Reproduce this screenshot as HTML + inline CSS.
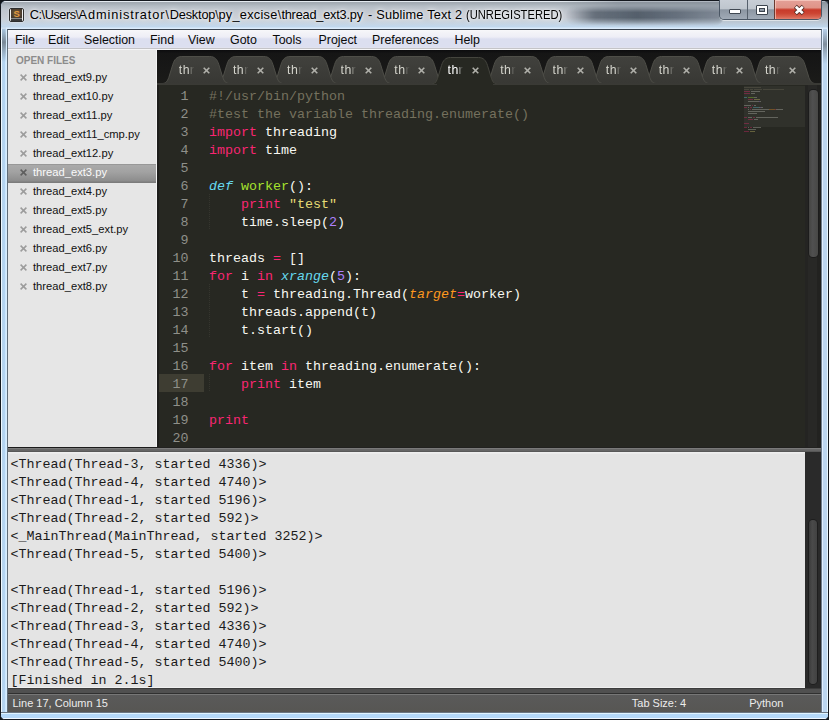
<!DOCTYPE html><html><head><meta charset="utf-8"><style>*{margin:0;padding:0;box-sizing:border-box}
html,body{width:829px;height:720px;overflow:hidden;background:#101418}
body{position:relative;font-family:"Liberation Sans",sans-serif}
body>div{position:absolute}
#frame{left:0;top:0;width:829px;height:720px;background:#b8d6f4;border:1px solid #14181e;border-radius:6px 6px 5px 5px}
#tglass{left:1px;top:1px;width:827px;height:28px;border-radius:5px 5px 0 0;background:linear-gradient(180deg,#e4eaf0 0,#e4eaf0 1px,#a0a8b0 1px,#a8b0b8 3px,#b4bcc4 5px,#c0c6ce 9px,#c8ccd4 16px,#c8d2dc 20px,#c4d6e8 24px,#c0d8ee 26px,#dcecfc 27px,#dcecfc 28px)}
#blob{left:566px;top:5px;width:158px;height:21px;border-radius:10px;background:linear-gradient(90deg,rgba(70,80,92,0) 0%,rgba(66,76,88,.75) 18%,rgba(58,68,80,.9) 45%,rgba(70,80,94,.8) 70%,rgba(95,106,120,.6) 100%);-webkit-mask-image:linear-gradient(180deg,transparent 0%,#000 35%,#000 60%,transparent 100%);filter:blur(2px)}
#blob2{left:560px;top:1px;width:268px;height:27px;background:linear-gradient(180deg,rgba(110,120,130,.45),rgba(120,135,150,.25) 60%,rgba(150,170,190,0));-webkit-mask-image:linear-gradient(90deg,transparent 0,#000 60px)}
#lglass{left:1px;top:29px;width:7px;height:683px;background:linear-gradient(90deg,#eef8ff 0,#eef8ff 1px,#b8d4ec 1px,#b2d4f4 4px,#c8e4fc 4px,#dcf0ff 6px,#606c78 6px,#606c78 7px)}
#rglass{left:821px;top:29px;width:7px;height:683px;background:linear-gradient(90deg,#6c7c8c 0,#6c7c8c 1px,#e0eeff 1px,#e0eeff 2px,#bcd6f0 2px,#bcd6f0 6px,#e8f8ff 6px,#e8f8ff 7px)}
#bglass{left:1px;top:712px;width:827px;height:7px;border-radius:0 0 4px 4px;background:linear-gradient(180deg,#6a7682 0,#6a7682 1px,#e0f4ff 1px,#e0f4ff 2px,#b4d8f8 2px,#b4d8f8 6px,#f0f8ff 6px,#f0f8ff 7px)}
#icon{left:9px;top:8px;width:15px;height:14px;background:#f2f2f2;border:1px solid #2e2e2e;border-radius:2px;box-shadow:0 0 2px rgba(255,255,255,.8)}
#iconin{position:absolute;left:1px;top:0px;width:11px;height:9px;background:radial-gradient(ellipse at 50% 45%,#7a5a36,#4a3c2e 70%,#3a342c);overflow:hidden}
#iconin b{position:absolute;left:2.5px;top:-1px;font:bold 9.5px "Liberation Sans",sans-serif;color:#e09a40}
#iconbar{position:absolute;left:1px;top:9px;width:11px;height:3px;background:linear-gradient(180deg,#8a8a8a 0,#8a8a8a 1px,#3a3a3a 1px)}
.title{left:29px;top:6.5px;font-size:12.75px;color:#000;white-space:nowrap;text-shadow:0 0 7px rgba(255,255,255,.95),0 0 3px rgba(255,255,255,.9)}
#wbtns{left:719px;top:0;width:103px;height:20px;border:1px solid #4a5664;border-top:none;border-radius:0 0 5px 5px;overflow:hidden;box-shadow:0 1px 0 rgba(255,255,255,.5)}
#bmin{position:absolute;left:0;top:0;width:28px;height:19px;background:linear-gradient(180deg,#c8ced6 0%,#bfc6ce 45%,#8c96a2 52%,#a0aab6 100%);border-right:1px solid #56606c}
#bmax{position:absolute;left:28px;top:0;width:27px;height:19px;background:linear-gradient(180deg,#c8ced6 0%,#bfc6ce 45%,#8c96a2 52%,#a0aab6 100%);border-right:1px solid #6a3a30}
#bclose{position:absolute;left:55px;top:0;width:48px;height:19px;background:linear-gradient(180deg,#e4a098 0%,#e09488 40%,#c83a2a 52%,#cc4432 70%,#d86450 90%,#e08070 100%);box-shadow:inset 1px 1px 0 rgba(255,220,210,.6),inset -1px 0 0 rgba(255,220,210,.4)}
#gmin{position:absolute;left:9px;top:9px;width:12px;height:5px;background:#fff;border:1px solid #404852;border-radius:1px}
#gmax{position:absolute;left:8px;top:5px;width:12px;height:10px;border:1px solid #3c444e;border-radius:1px;box-shadow:inset 0 0 0 2px #fff,inset 0 0 0 3px #3c444e}

#menubar{left:7px;top:29px;width:815px;height:19px;background:linear-gradient(180deg,#f8f8fa 0px,#f4f4f8 2px,#eeeef6 7px,#dcdff0 9px,#dcdff0 17px,#e4e4ee 18px);border-top:1px solid #3a4450;border-left:1px solid #606c78;border-right:1px solid #6c7c8c}
#mbline1{left:8px;top:48px;width:813px;height:1px;background:#c4c4c8}
#mbline2{left:8px;top:49px;width:813px;height:1px;background:#f6f6f8}
.mi{position:absolute;top:2.5px;font-size:12.4px;color:#0a0a0a;white-space:nowrap}
#sidebar{left:8px;top:50px;width:149px;height:398px;background:#e6e6e6;overflow:hidden}
#sbhl{position:absolute;left:148px;top:0;width:1px;height:397px;background:#f4f4f4}
#sidebar:after{content:"";position:absolute;left:0;top:397px;width:149px;height:1px;background:#1c1c1c}
#ofh{position:absolute;left:8px;top:4.8px;font:bold 10px "Liberation Sans",sans-serif;color:#8c8c8c}
.row{position:absolute;left:0;width:149px;height:19px}
.row.sel{background:linear-gradient(180deg,#989898 0,#989898 1px,#aaaaaa 1px,#a2a2a2 8px,#8c8c8c 17px,#7c7c7c 18px);}
.fx{position:absolute;left:12px;top:5px;width:7px;height:7px;line-height:0}
.fn{position:absolute;left:25px;top:2px;font-size:11.2px;color:#111;white-space:nowrap}
.sel .fn{color:#fafafa}
#tabbar{left:157px;top:50px;width:664px;height:34px;overflow:hidden}
.tabt{position:absolute;top:13px;font-size:12.3px;letter-spacing:0.5px;color:#d4d4cc;white-space:nowrap;width:22px;overflow:hidden;-webkit-mask-image:linear-gradient(90deg,#000 0,#000 11px,rgba(0,0,0,.3) 12.5px,rgba(0,0,0,.08) 15px,transparent 18px)}
.tabt.act{color:#ffffff}
.tabx{position:absolute;top:17px;width:7px;height:7px;line-height:0}
#editor{left:157px;top:84px;width:664px;height:364px;background:#272822;overflow:hidden}
#edl1{left:157px;top:84px;width:2px;height:364px;background:#1e1e1c}
#edl2{left:157px;top:447px;width:664px;height:1px;background:#222220}
.code{position:absolute;font-family:"Liberation Mono",monospace;font-size:13.33px;line-height:18px;white-space:pre}
#gutter{left:0;top:4px;width:31.5px;text-align:right;color:#8f908a}
#gl{position:absolute;left:1px;top:290px;width:46px;height:18px;background:#3e3d32}
#src{left:52px;top:4px;color:#f8f8f2}
.guide{position:absolute;left:52px;width:1px;height:18px;background:repeating-linear-gradient(180deg,#35352e 0 1px,transparent 1px 2px)}
.c{color:#75715e}.k{color:#f92672}.s{color:#66d9ef;font-style:italic}.f{color:#a6e22e}.y{color:#e6db74}.n{color:#ae81ff}.p{color:#fd971f;font-style:italic}
#mmbox{position:absolute;left:587px;top:2px;width:61px;height:41px;background:rgba(255,255,255,.045)}
#mm{position:absolute;left:587px;top:3px;width:61px;height:50px}
#mm i{position:absolute;height:1.2px;opacity:.32}
#vtrack{position:absolute;left:648px;top:0;width:16px;height:364px;background:linear-gradient(90deg,#242422 0,#242422 3px,#282826 3px,#282826 12px,#222220 12px)}
#vthumb{position:absolute;left:652px;top:6px;width:8.5px;height:167px;background:linear-gradient(90deg,#444442,#505050 40%,#484846);border-radius:4px;box-shadow:0 0 0 1px #1c1c1c}
#sep{left:8px;top:448px;width:813px;height:4px;background:linear-gradient(180deg,#7a7a7a 0,#7a7a7a 1px,#686868 1px,#646464 3px,#585858 3px)}
#output{left:8px;top:452px;width:797px;height:236px;background:#e4e4e4;overflow:hidden}
#ohl1{position:absolute;left:0;top:0;width:797px;height:2px;background:linear-gradient(180deg,#f0f0f0,#e8e8e8)}
#ohl2{position:absolute;left:0;top:235px;width:797px;height:1px;background:#f0f0f0}
#out{left:2.5px;top:3.5px;color:#1a1a1a}
#otrack{left:805px;top:452px;width:16px;height:236px;background:#2a2a2a}
#othumb{left:809px;top:520px;width:8px;height:164px;box-shadow:0 0 0 1px #1e1e1e;background:linear-gradient(90deg,#3a3a3a,#4a4a4a 40%,#424242);border-radius:4px}
#status{left:8px;top:688px;width:813px;height:24px;background:linear-gradient(180deg,#5a5a5a 7px,#575653 24px)}
#stband{position:absolute;left:0;top:0;width:813px;height:5px;background:#505050;border-top:1px solid #3c3c3c}
#stl1{position:absolute;left:0;top:5px;width:813px;height:1px;background:#303030}
#stl2{position:absolute;left:0;top:6px;width:813px;height:1px;background:#777777}
.st{position:absolute;top:9px;font-size:11px;color:#ececec;white-space:nowrap}

#tabline{left:157px;top:84px;width:664px;height:1px;background:#3a3a35}
#tabline2{top:84px;height:1px;background:#272822}
#lrefl{left:2px;top:26px;width:4px;height:36px;background:linear-gradient(180deg,rgba(110,120,130,0),rgba(100,110,120,.75) 45%,rgba(110,120,130,.5) 65%,rgba(120,130,140,0))}
#rrefl{left:823px;top:28px;width:4px;height:36px;background:linear-gradient(180deg,rgba(110,120,130,0),rgba(100,110,120,.7) 45%,rgba(110,120,130,.45) 65%,rgba(120,130,140,0))}
</style></head><body>
<div id="frame"></div>
<div id="tglass"></div><div id="blob"></div><div id="blob2"></div>
<div id="lglass"></div><div id="rglass"></div><div id="bglass"></div><div id="lrefl"></div><div id="rrefl"></div>
<div id="icon"><div id="iconin"><b>S</b></div><div id="iconbar"></div></div>
<div class="title" style="left:29.8px;letter-spacing:-0.47px">C:\Users\</div>
<div class="title" style="left:78.6px;letter-spacing:0.9px">Administrator\</div>
<div class="title" style="left:169.8px;letter-spacing:-0.2px">Desktop\</div>
<div class="title" style="left:218.5px;letter-spacing:0.27px">py_excise\</div>
<div class="title" style="left:281.4px;letter-spacing:-0.21px">thread_ext3.py</div>
<div class="title" style="left:368px;letter-spacing:0.2px">- Sublime Text 2</div>
<div class="title" style="left:466px;transform:scaleX(0.876);transform-origin:0 0">(UNREGISTERED)</div>
<div id="wbtns"><div id="bmin"><div id="gmin"></div></div><div id="bmax"><div id="gmax"></div></div><div id="bclose"><svg width="14" height="12" viewBox="0 0 14 12" style="position:absolute;left:18px;top:4px"><path d="M2.4,2.4 L10.2,9.6 M10.2,2.4 L2.4,9.6" stroke="#4a2620" stroke-width="4.2"/><path d="M2.8,2.8 L9.8,9.2 M9.8,2.8 L2.8,9.2" stroke="#fff" stroke-width="2.8"/></svg></div></div>
<div id="menubar">
<span class="mi" style="left:7.0px">File</span>
<span class="mi" style="left:40.0px">Edit</span>
<span class="mi" style="left:76.0px">Selection</span>
<span class="mi" style="left:142.0px">Find</span>
<span class="mi" style="left:180.0px">View</span>
<span class="mi" style="left:222.0px">Goto</span>
<span class="mi" style="left:264.5px">Tools</span>
<span class="mi" style="left:310.5px">Project</span>
<span class="mi" style="left:364.0px">Preferences</span>
<span class="mi" style="left:446.5px">Help</span>
</div><div id="mbline1"></div><div id="mbline2"></div>
<div id="sidebar"><div id="ofh">OPEN FILES</div>
<div class="row" style="top:19px"><span class="fx"><svg width="7" height="7" viewBox="0 0 7 7"><path d="M0.6,0.6 L6.4,6.4 M6.4,0.6 L0.6,6.4" stroke="#9c9c9c" stroke-width="1.5"/></svg></span><span class="fn">thread_ext9.py</span></div>
<div class="row" style="top:38px"><span class="fx"><svg width="7" height="7" viewBox="0 0 7 7"><path d="M0.6,0.6 L6.4,6.4 M6.4,0.6 L0.6,6.4" stroke="#9c9c9c" stroke-width="1.5"/></svg></span><span class="fn">thread_ext10.py</span></div>
<div class="row" style="top:57px"><span class="fx"><svg width="7" height="7" viewBox="0 0 7 7"><path d="M0.6,0.6 L6.4,6.4 M6.4,0.6 L0.6,6.4" stroke="#9c9c9c" stroke-width="1.5"/></svg></span><span class="fn">thread_ext11.py</span></div>
<div class="row" style="top:76px"><span class="fx"><svg width="7" height="7" viewBox="0 0 7 7"><path d="M0.6,0.6 L6.4,6.4 M6.4,0.6 L0.6,6.4" stroke="#9c9c9c" stroke-width="1.5"/></svg></span><span class="fn">thread_ext11_cmp.py</span></div>
<div class="row" style="top:95px"><span class="fx"><svg width="7" height="7" viewBox="0 0 7 7"><path d="M0.6,0.6 L6.4,6.4 M6.4,0.6 L0.6,6.4" stroke="#9c9c9c" stroke-width="1.5"/></svg></span><span class="fn">thread_ext12.py</span></div>
<div class="row sel" style="top:114px"><span class="fx"><svg width="7" height="7" viewBox="0 0 7 7"><path d="M0.6,0.6 L6.4,6.4 M6.4,0.6 L0.6,6.4" stroke="#5e5e5e" stroke-width="1.5"/></svg></span><span class="fn">thread_ext3.py</span></div>
<div class="row" style="top:133px"><span class="fx"><svg width="7" height="7" viewBox="0 0 7 7"><path d="M0.6,0.6 L6.4,6.4 M6.4,0.6 L0.6,6.4" stroke="#9c9c9c" stroke-width="1.5"/></svg></span><span class="fn">thread_ext4.py</span></div>
<div class="row" style="top:152px"><span class="fx"><svg width="7" height="7" viewBox="0 0 7 7"><path d="M0.6,0.6 L6.4,6.4 M6.4,0.6 L0.6,6.4" stroke="#9c9c9c" stroke-width="1.5"/></svg></span><span class="fn">thread_ext5.py</span></div>
<div class="row" style="top:171px"><span class="fx"><svg width="7" height="7" viewBox="0 0 7 7"><path d="M0.6,0.6 L6.4,6.4 M6.4,0.6 L0.6,6.4" stroke="#9c9c9c" stroke-width="1.5"/></svg></span><span class="fn">thread_ext5_ext.py</span></div>
<div class="row" style="top:190px"><span class="fx"><svg width="7" height="7" viewBox="0 0 7 7"><path d="M0.6,0.6 L6.4,6.4 M6.4,0.6 L0.6,6.4" stroke="#9c9c9c" stroke-width="1.5"/></svg></span><span class="fn">thread_ext6.py</span></div>
<div class="row" style="top:209px"><span class="fx"><svg width="7" height="7" viewBox="0 0 7 7"><path d="M0.6,0.6 L6.4,6.4 M6.4,0.6 L0.6,6.4" stroke="#9c9c9c" stroke-width="1.5"/></svg></span><span class="fn">thread_ext7.py</span></div>
<div class="row" style="top:228px"><span class="fx"><svg width="7" height="7" viewBox="0 0 7 7"><path d="M0.6,0.6 L6.4,6.4 M6.4,0.6 L0.6,6.4" stroke="#9c9c9c" stroke-width="1.5"/></svg></span><span class="fn">thread_ext8.py</span></div>
<div id="sbhl"></div></div>
<div id="tabbar">
<svg width="664" height="34" viewBox="0 0 664 34" style="position:absolute;left:0;top:0"><defs><linearGradient id="tg" x1="0" y1="0" x2="0" y2="1"><stop offset="0" stop-color="#41413d"/><stop offset="1" stop-color="#383834"/></linearGradient><linearGradient id="bgg" x1="0" y1="0" x2="0" y2="1"><stop offset="0" stop-color="#0c0c0e"/><stop offset="0.1" stop-color="#151515"/><stop offset="1" stop-color="#1b1b19"/></linearGradient></defs><rect x="0" y="0" width="664" height="34" fill="url(#bgg)"/><path d="M 590.90,33.50 C 594.90,33.50 596.40,31.50 597.90,27.50 L 601.90,14.50 C 603.40,9.50 605.90,6.50 610.90,6.50 L 638.90,6.50 C 643.90,6.50 646.40,9.50 647.90,14.50 L 651.90,27.50 C 653.40,31.50 654.90,33.50 658.90,33.50 Z" fill="url(#tg)" stroke="#4e4e48" stroke-width="1"/><path d="M 537.80,33.50 C 541.80,33.50 543.30,31.50 544.80,27.50 L 548.80,14.50 C 550.30,9.50 552.80,6.50 557.80,6.50 L 585.80,6.50 C 590.80,6.50 593.30,9.50 594.80,14.50 L 598.80,27.50 C 600.30,31.50 601.80,33.50 605.80,33.50 Z" fill="url(#tg)" stroke="#4e4e48" stroke-width="1"/><path d="M 484.70,33.50 C 488.70,33.50 490.20,31.50 491.70,27.50 L 495.70,14.50 C 497.20,9.50 499.70,6.50 504.70,6.50 L 532.70,6.50 C 537.70,6.50 540.20,9.50 541.70,14.50 L 545.70,27.50 C 547.20,31.50 548.70,33.50 552.70,33.50 Z" fill="url(#tg)" stroke="#4e4e48" stroke-width="1"/><path d="M 431.80,33.50 C 435.80,33.50 437.30,31.50 438.80,27.50 L 442.80,14.50 C 444.30,9.50 446.80,6.50 451.80,6.50 L 479.80,6.50 C 484.80,6.50 487.30,9.50 488.80,14.50 L 492.80,27.50 C 494.30,31.50 495.80,33.50 499.80,33.50 Z" fill="url(#tg)" stroke="#4e4e48" stroke-width="1"/><path d="M 378.60,33.50 C 382.60,33.50 384.10,31.50 385.60,27.50 L 389.60,14.50 C 391.10,9.50 393.60,6.50 398.60,6.50 L 426.60,6.50 C 431.60,6.50 434.10,9.50 435.60,14.50 L 439.60,27.50 C 441.10,31.50 442.60,33.50 446.60,33.50 Z" fill="url(#tg)" stroke="#4e4e48" stroke-width="1"/><path d="M 326.20,33.50 C 330.20,33.50 331.70,31.50 333.20,27.50 L 337.20,14.50 C 338.70,9.50 341.20,6.50 346.20,6.50 L 374.20,6.50 C 379.20,6.50 381.70,9.50 383.20,14.50 L 387.20,27.50 C 388.70,31.50 390.20,33.50 394.20,33.50 Z" fill="url(#tg)" stroke="#4e4e48" stroke-width="1"/><path d="M 220.30,33.50 C 224.30,33.50 225.80,31.50 227.30,27.50 L 231.30,14.50 C 232.80,9.50 235.30,6.50 240.30,6.50 L 268.30,6.50 C 273.30,6.50 275.80,9.50 277.30,14.50 L 281.30,27.50 C 282.80,31.50 284.30,33.50 288.30,33.50 Z" fill="url(#tg)" stroke="#4e4e48" stroke-width="1"/><path d="M 166.60,33.50 C 170.60,33.50 172.10,31.50 173.60,27.50 L 177.60,14.50 C 179.10,9.50 181.60,6.50 186.60,6.50 L 214.60,6.50 C 219.60,6.50 222.10,9.50 223.60,14.50 L 227.60,27.50 C 229.10,31.50 230.60,33.50 234.60,33.50 Z" fill="url(#tg)" stroke="#4e4e48" stroke-width="1"/><path d="M 113.00,33.50 C 117.00,33.50 118.50,31.50 120.00,27.50 L 124.00,14.50 C 125.50,9.50 128.00,6.50 133.00,6.50 L 161.00,6.50 C 166.00,6.50 168.50,9.50 170.00,14.50 L 174.00,27.50 C 175.50,31.50 177.00,33.50 181.00,33.50 Z" fill="url(#tg)" stroke="#4e4e48" stroke-width="1"/><path d="M 58.90,33.50 C 62.90,33.50 64.40,31.50 65.90,27.50 L 69.90,14.50 C 71.40,9.50 73.90,6.50 78.90,6.50 L 106.90,6.50 C 111.90,6.50 114.40,9.50 115.90,14.50 L 119.90,27.50 C 121.40,31.50 122.90,33.50 126.90,33.50 Z" fill="url(#tg)" stroke="#4e4e48" stroke-width="1"/><path d="M 4.80,33.50 C 8.80,33.50 10.30,31.50 11.80,27.50 L 15.80,14.50 C 17.30,9.50 19.80,6.50 24.80,6.50 L 52.80,6.50 C 57.80,6.50 60.30,9.50 61.80,14.50 L 65.80,27.50 C 67.30,31.50 68.80,33.50 72.80,33.50 Z" fill="url(#tg)" stroke="#4e4e48" stroke-width="1"/><rect x="0" y="33" width="664" height="1" fill="#393935"/><path d="M 273.50,34.50 C 277.50,34.50 279.00,32.50 280.50,28.50 L 284.50,15.50 C 286.00,10.50 288.50,7.50 293.50,7.50 L 321.50,7.50 C 326.50,7.50 329.00,10.50 330.50,15.50 L 334.50,28.50 C 336.00,32.50 337.50,34.50 341.50,34.50 Z" fill="#272822" stroke="#45453e" stroke-width="1"/><rect x="277.5" y="33" width="60" height="1" fill="#272822"/></svg>
<div class="tabt" style="left:21.8px">thr</div><div class="tabx" style="left:45.8px"><svg width="7" height="7" viewBox="0 0 7 7"><path d="M0.7,0.7 L6.3,6.3 M6.3,0.7 L0.7,6.3" stroke="#b0b0aa" stroke-width="1.6"/></svg></div>
<div class="tabt" style="left:75.9px">thr</div><div class="tabx" style="left:99.9px"><svg width="7" height="7" viewBox="0 0 7 7"><path d="M0.7,0.7 L6.3,6.3 M6.3,0.7 L0.7,6.3" stroke="#b0b0aa" stroke-width="1.6"/></svg></div>
<div class="tabt" style="left:130.0px">thr</div><div class="tabx" style="left:154.0px"><svg width="7" height="7" viewBox="0 0 7 7"><path d="M0.7,0.7 L6.3,6.3 M6.3,0.7 L0.7,6.3" stroke="#b0b0aa" stroke-width="1.6"/></svg></div>
<div class="tabt" style="left:183.6px">thr</div><div class="tabx" style="left:207.6px"><svg width="7" height="7" viewBox="0 0 7 7"><path d="M0.7,0.7 L6.3,6.3 M6.3,0.7 L0.7,6.3" stroke="#b0b0aa" stroke-width="1.6"/></svg></div>
<div class="tabt" style="left:237.3px">thr</div><div class="tabx" style="left:261.3px"><svg width="7" height="7" viewBox="0 0 7 7"><path d="M0.7,0.7 L6.3,6.3 M6.3,0.7 L0.7,6.3" stroke="#b0b0aa" stroke-width="1.6"/></svg></div>
<div class="tabt act" style="left:290.5px">thr</div><div class="tabx" style="left:314.5px"><svg width="7" height="7" viewBox="0 0 7 7"><path d="M0.7,0.7 L6.3,6.3 M6.3,0.7 L0.7,6.3" stroke="#b0b0aa" stroke-width="1.6"/></svg></div>
<div class="tabt" style="left:343.2px">thr</div><div class="tabx" style="left:367.2px"><svg width="7" height="7" viewBox="0 0 7 7"><path d="M0.7,0.7 L6.3,6.3 M6.3,0.7 L0.7,6.3" stroke="#b0b0aa" stroke-width="1.6"/></svg></div>
<div class="tabt" style="left:395.6px">thr</div><div class="tabx" style="left:419.6px"><svg width="7" height="7" viewBox="0 0 7 7"><path d="M0.7,0.7 L6.3,6.3 M6.3,0.7 L0.7,6.3" stroke="#b0b0aa" stroke-width="1.6"/></svg></div>
<div class="tabt" style="left:448.8px">thr</div><div class="tabx" style="left:472.8px"><svg width="7" height="7" viewBox="0 0 7 7"><path d="M0.7,0.7 L6.3,6.3 M6.3,0.7 L0.7,6.3" stroke="#b0b0aa" stroke-width="1.6"/></svg></div>
<div class="tabt" style="left:501.7px">thr</div><div class="tabx" style="left:525.7px"><svg width="7" height="7" viewBox="0 0 7 7"><path d="M0.7,0.7 L6.3,6.3 M6.3,0.7 L0.7,6.3" stroke="#b0b0aa" stroke-width="1.6"/></svg></div>
<div class="tabt" style="left:554.8px">thr</div><div class="tabx" style="left:578.8px"><svg width="7" height="7" viewBox="0 0 7 7"><path d="M0.7,0.7 L6.3,6.3 M6.3,0.7 L0.7,6.3" stroke="#b0b0aa" stroke-width="1.6"/></svg></div>
<div class="tabt" style="left:607.9px">thr</div><div class="tabx" style="left:631.9px"><svg width="7" height="7" viewBox="0 0 7 7"><path d="M0.7,0.7 L6.3,6.3 M6.3,0.7 L0.7,6.3" stroke="#b0b0aa" stroke-width="1.6"/></svg></div>
</div>
<div id="editor">
<div id="gl"></div>
<div id="gutter" class="code">1
2
3
4
5
6
7
8
9
10
11
12
13
14
15
16
17
18
19
20</div>
<div class="guide" style="top:110px"></div>
<div class="guide" style="top:128px"></div>
<div class="guide" style="top:200px"></div>
<div class="guide" style="top:218px"></div>
<div class="guide" style="top:236px"></div>
<div class="guide" style="top:290px"></div>
<div id="src" class="code"><span class="c">#!/usr/bin/python</span>
<span class="c">#test the variable threading.enumerate()</span>
<span class="k">import</span> threading
<span class="k">import</span> time

<span class="s">def</span> <span class="f">worker</span>():
    <span class="k">print</span> <span class="y">"test"</span>
    time.sleep(<span class="n">2</span>)

threads <span class="k">=</span> []
<span class="k">for</span> i <span class="k">in</span> <span class="s">xrange</span>(<span class="n">5</span>):
    t <span class="k">=</span> threading.Thread(<span class="p">target</span><span class="k">=</span>worker)
    threads.append(t)
    t.start()

<span class="k">for</span> item <span class="k">in</span> threading.enumerate():
    <span class="k">print</span> item

<span class="k">print</span>
</div>
<div id="mmbox"></div>
<div id="mm">
<i style="left:0px;top:0px;width:17px;background:#75715e"></i>
<i style="left:0px;top:2px;width:5px;background:#75715e"></i>
<i style="left:6px;top:2px;width:3px;background:#75715e"></i>
<i style="left:10px;top:2px;width:8px;background:#75715e"></i>
<i style="left:19px;top:2px;width:21px;background:#75715e"></i>
<i style="left:0px;top:4px;width:6px;background:#f92672"></i>
<i style="left:7px;top:4px;width:9px;background:#d0d0c8"></i>
<i style="left:0px;top:6px;width:6px;background:#f92672"></i>
<i style="left:7px;top:6px;width:4px;background:#d0d0c8"></i>
<i style="left:0px;top:10px;width:3px;background:#66d9ef"></i>
<i style="left:4px;top:10px;width:6px;background:#a6e22e"></i>
<i style="left:10px;top:10px;width:3px;background:#d0d0c8"></i>
<i style="left:4px;top:12px;width:5px;background:#f92672"></i>
<i style="left:10px;top:12px;width:6px;background:#e6db74"></i>
<i style="left:4px;top:14px;width:11px;background:#d0d0c8"></i>
<i style="left:15px;top:14px;width:1px;background:#ae81ff"></i>
<i style="left:16px;top:14px;width:1px;background:#d0d0c8"></i>
<i style="left:0px;top:18px;width:7px;background:#d0d0c8"></i>
<i style="left:8px;top:18px;width:1px;background:#f92672"></i>
<i style="left:10px;top:18px;width:2px;background:#d0d0c8"></i>
<i style="left:0px;top:20px;width:3px;background:#f92672"></i>
<i style="left:4px;top:20px;width:1px;background:#d0d0c8"></i>
<i style="left:6px;top:20px;width:2px;background:#f92672"></i>
<i style="left:9px;top:20px;width:6px;background:#66d9ef"></i>
<i style="left:15px;top:20px;width:1px;background:#d0d0c8"></i>
<i style="left:16px;top:20px;width:1px;background:#ae81ff"></i>
<i style="left:17px;top:20px;width:2px;background:#d0d0c8"></i>
<i style="left:4px;top:22px;width:1px;background:#d0d0c8"></i>
<i style="left:6px;top:22px;width:1px;background:#f92672"></i>
<i style="left:8px;top:22px;width:17px;background:#d0d0c8"></i>
<i style="left:25px;top:22px;width:6px;background:#fd971f"></i>
<i style="left:31px;top:22px;width:1px;background:#f92672"></i>
<i style="left:32px;top:22px;width:7px;background:#d0d0c8"></i>
<i style="left:4px;top:24px;width:17px;background:#d0d0c8"></i>
<i style="left:4px;top:26px;width:9px;background:#d0d0c8"></i>
<i style="left:0px;top:30px;width:3px;background:#f92672"></i>
<i style="left:4px;top:30px;width:4px;background:#d0d0c8"></i>
<i style="left:9px;top:30px;width:2px;background:#f92672"></i>
<i style="left:12px;top:30px;width:22px;background:#d0d0c8"></i>
<i style="left:4px;top:32px;width:5px;background:#f92672"></i>
<i style="left:10px;top:32px;width:4px;background:#d0d0c8"></i>
<i style="left:0px;top:36px;width:5px;background:#f92672"></i>
<i style="left:0px;top:40px;width:3px;background:#f92672"></i>
<i style="left:4px;top:40px;width:1px;background:#d0d0c8"></i>
<i style="left:6px;top:40px;width:2px;background:#f92672"></i>
<i style="left:9px;top:40px;width:8px;background:#d0d0c8"></i>
<i style="left:4px;top:42px;width:8px;background:#d0d0c8"></i>
<i style="left:0px;top:44px;width:5px;background:#f92672"></i>
<i style="left:6px;top:44px;width:5px;background:#e6db74"></i>
</div>
<div id="vtrack"></div><div id="vthumb"></div>
</div>
<div id="edl1"></div><div id="edl2"></div><div id="tabline"></div>
<div id="tabline2" style="left:436.5px;width:56px"></div>
<div id="sep"></div>
<div id="output"><div id="ohl1"></div><div id="ohl2"></div><div id="out" class="code">&lt;Thread(Thread-3, started 4336)&gt;
&lt;Thread(Thread-4, started 4740)&gt;
&lt;Thread(Thread-1, started 5196)&gt;
&lt;Thread(Thread-2, started 592)&gt;
&lt;_MainThread(MainThread, started 3252)&gt;
&lt;Thread(Thread-5, started 5400)&gt;

&lt;Thread(Thread-1, started 5196)&gt;
&lt;Thread(Thread-2, started 592)&gt;
&lt;Thread(Thread-3, started 4336)&gt;
&lt;Thread(Thread-4, started 4740)&gt;
&lt;Thread(Thread-5, started 5400)&gt;
[Finished in 2.1s]</div></div>
<div id="otrack"></div><div id="othumb"></div>
<div id="status"><div id="stband"></div><div id="stl1"></div><div id="stl2"></div><span class="st" style="left:4.5px">Line 17, Column 15</span><span class="st" style="left:623.8px">Tab Size: 4</span><span class="st" style="left:741.2px">Python</span></div>
</body></html>
